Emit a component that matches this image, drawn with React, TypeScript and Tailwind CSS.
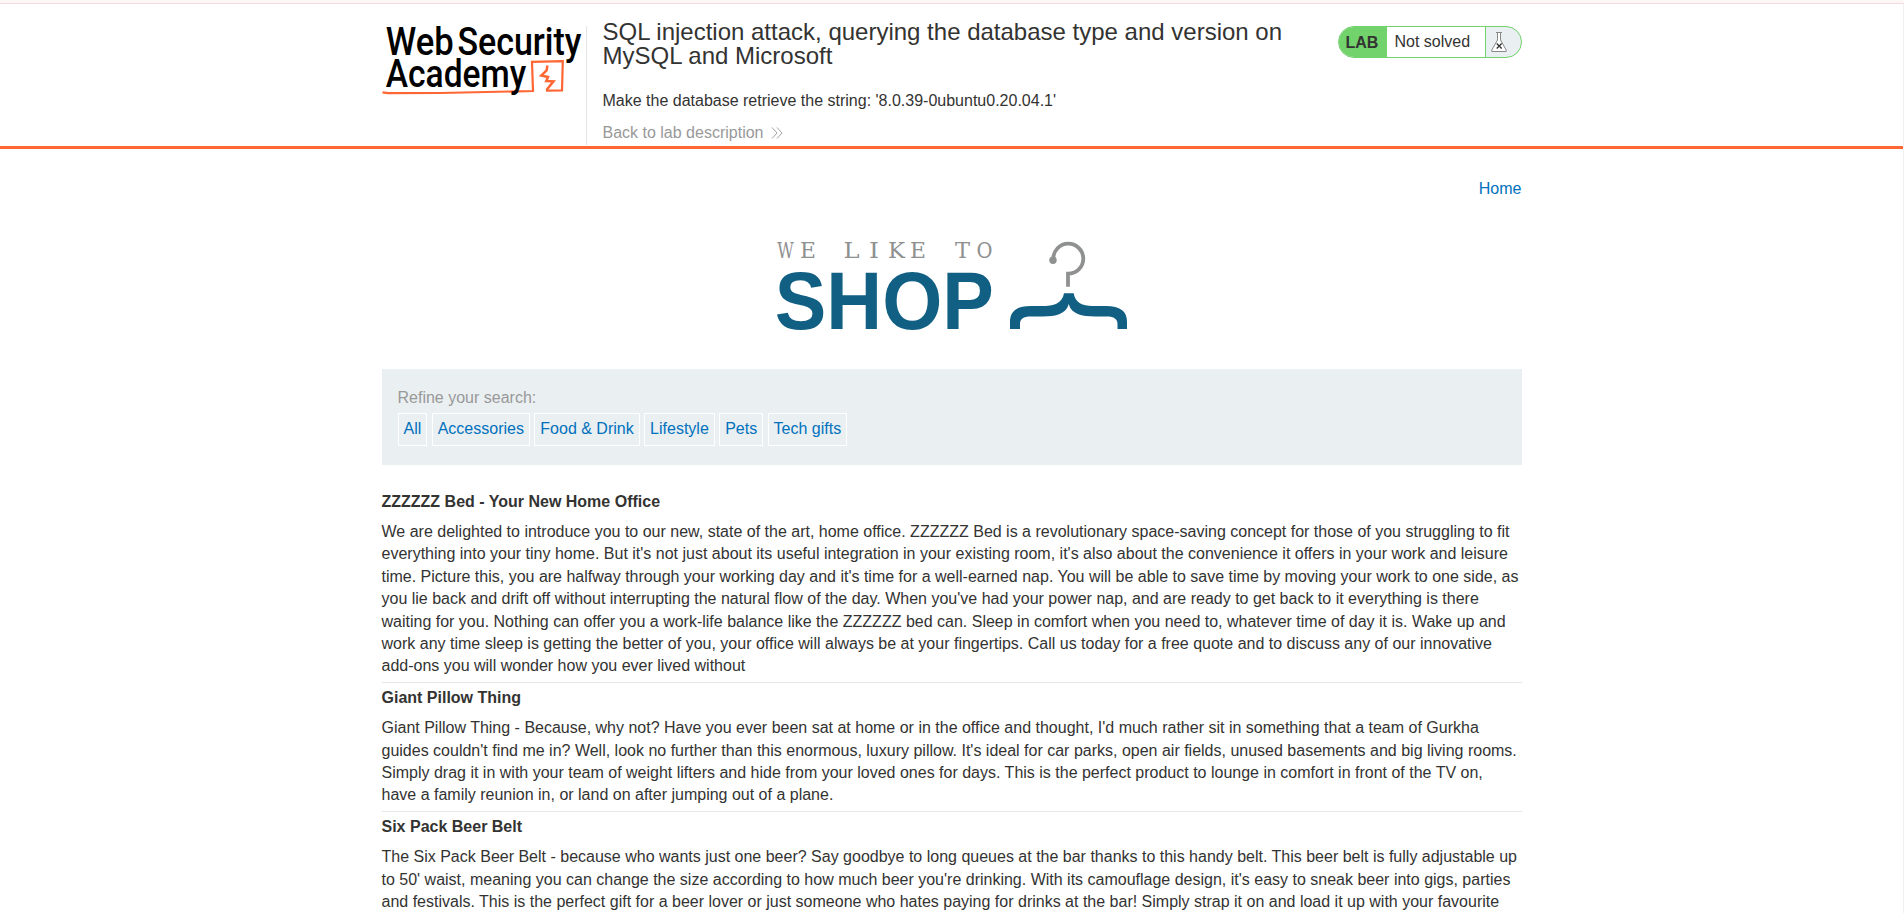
import React from "react";

const filters = ["All", "Accessories", "Food & Drink", "Lifestyle", "Pets", "Tech gifts"];

const products = [
  {
    title: "ZZZZZZ Bed - Your New Home Office",
    text: "We are delighted to introduce you to our new, state of the art, home office. ZZZZZZ Bed is a revolutionary space-saving concept for those of you struggling to fit everything into your tiny home. But it's not just about its useful integration in your existing room, it's also about the convenience it offers in your work and leisure time. Picture this, you are halfway through your working day and it's time for a well-earned nap. You will be able to save time by moving your work to one side, as you lie back and drift off without interrupting the natural flow of the day. When you've had your power nap, and are ready to get back to it everything is there waiting for you. Nothing can offer you a work-life balance like the ZZZZZZ bed can. Sleep in comfort when you need to, whatever time of day it is. Wake up and work any time sleep is getting the better of you, your office will always be at your fingertips. Call us today for a free quote and to discuss any of our innovative add-ons you will wonder how you ever lived without",
  },
  {
    title: "Giant Pillow Thing",
    text: "Giant Pillow Thing - Because, why not? Have you ever been sat at home or in the office and thought, I'd much rather sit in something that a team of Gurkha guides couldn't find me in? Well, look no further than this enormous, luxury pillow. It's ideal for car parks, open air fields, unused basements and big living rooms. Simply drag it in with your team of weight lifters and hide from your loved ones for days. This is the perfect product to lounge in comfort in front of the TV on, have a family reunion in, or land on after jumping out of a plane.",
  },
  {
    title: "Six Pack Beer Belt",
    text: "The Six Pack Beer Belt - because who wants just one beer? Say goodbye to long queues at the bar thanks to this handy belt. This beer belt is fully adjustable up to 50' waist, meaning you can change the size according to how much beer you're drinking. With its camouflage design, it's easy to sneak beer into gigs, parties and festivals. This is the perfect gift for a beer lover or just someone who hates paying for drinks at the bar! Simply strap it on and load it up with your favourite",
  },
];

// Letter, left edge and advance of each character in the logo's top line.
const tagline: [string, number, number][] = [
  ["W", 777.3, 16.5],
  ["E", 800, 16],
  ["L", 843.5, 16],
  ["I", 869, 10],
  ["K", 888, 17],
  ["E", 910, 16],
  ["T", 955, 15],
  ["O", 976.5, 16],
];

function AcademyLogo() {
  return (
    <svg className="block h-[76px] w-[204px] overflow-visible" viewBox="382 22 204 76" fontFamily="Roboto, sans-serif" fontWeight="500" fontSize="38" fill="#000">
      <path d="M382.5 92.3 L388 93.2 L440 93 L533 91 L532 61.8 L562.8 61.2 L562 90.3 L546 90.6" fill="none" stroke="#ff6633" strokeWidth="2.2" />
      <path d="M547.4 65.5 L546.6 70.5 L541.3 75.5 L548 77 L546.3 81 L553.5 81.3 L546.5 90" fill="none" stroke="#ff6633" strokeWidth="2.5" />
      <text x="385.8" y="54.5" textLength="68" lengthAdjust="spacingAndGlyphs">Web</text>
      <text x="457.4" y="54.5" textLength="124.1" lengthAdjust="spacingAndGlyphs">Security</text>
      <text x="385.8" y="87" textLength="140.4" lengthAdjust="spacingAndGlyphs">Academy</text>
    </svg>
  );
}

function ShopLogo() {
  return (
    <svg className="block h-[100px] w-[360px] overflow-visible" viewBox="772 235 360 100">
      <g fontFamily="'DejaVu Serif', serif" fontSize="22" fill="#8f9090">
        {tagline.map(([ch, x, w]) => (
          <text key={x} x={x} y="257.7" textLength={w} lengthAdjust="spacingAndGlyphs">{ch}</text>
        ))}
      </g>
      <text x="774.8" y="328.7" textLength="219" lengthAdjust="spacingAndGlyphs" fontFamily="'Liberation Sans', Arial, sans-serif" fontWeight="700" fontSize="81" fill="#115f83">SHOP</text>
      <path d="M1053.3 259 A15 15 0 1 1 1068 273.7 V286.7" fill="none" stroke="#8f9090" strokeWidth="3.8" />
      <circle cx="1053" cy="260.3" r="3.7" fill="#8f9090" />
      <path d="M1064 293.3 H1073.7 C1075 303 1083 306 1092 306 H1106 C1120 306 1127 311 1127 322 V329 H1117.5 V324 C1117.5 319 1114 316.5 1107 316.5 H1095 C1082 316.5 1071 314 1068.8 304 C1066 314 1056 316.5 1043 316.5 H1031 C1023 316.5 1020 319 1020 324 V329 H1010 V322 C1010 311 1017 306 1031 306 H1045 C1054 306 1062.5 303 1064 293.3 Z" fill="#115f83" />
    </svg>
  );
}

function LabStatus() {
  return (
    <div className="mt-[6px] flex h-8 w-[184px] overflow-hidden rounded-[16px] border border-[#72d26c] bg-[#eaeff2]">
      <div className="w-12 bg-[#72d26c] pl-[7px] leading-[31px] font-bold">LAB</div>
      <div className="w-[98px] bg-white pl-2 leading-[30px]">Not solved</div>
      <div className="w-9 border-l border-[#72d26c]">
        <svg className="block h-[30px] w-[31px]" viewBox="1486 27 31 30" fill="none">
          <path d="M1497.5 32.5 V40 L1491.8 50 V51.5 H1506.2 V50 L1500.5 40 V32.5" fill="#fff" stroke="#888" />
          <path d="M1496 32.5 H1502" stroke="#888" />
          <path d="M1496.7 43.5 L1501.7 48.5 M1501.7 43.5 L1496.7 48.5" stroke="#333" strokeWidth="1.3" />
        </svg>
      </div>
    </div>
  );
}

export default function App() {
  return (
    <div className="flex h-[913px] flex-col overflow-hidden bg-white font-['Liberation_Sans',Arial,sans-serif] text-base leading-[22.4px] text-[#333332]">
      <div className="h-1 shrink-0 border-b border-[#f0dcdf] bg-[#fff6f7]" />
      <div className="grow border-r border-[#f1f1f1]">
        <header className="h-[145px] border-b-[3px] border-[#ff6633] pt-4">
          <div className="mx-auto flex h-[126px] w-[1140px] items-start">
            <div className="mt-[2px]">
              <AcademyLogo />
            </div>
            <div className="mt-[6px] h-[119px] w-px bg-[#e3e3e3]" />
            <div className="w-[730px] pl-4">
              <h2 className="text-[24px] leading-6">SQL injection attack, querying the database type and version on MySQL and Microsoft</h2>
              <p className="mt-[22px]">Make the database retrieve the string: '8.0.39-0ubuntu0.20.04.1'</p>
              <a className="mt-[9.6px] flex items-center text-[#999]">
                Back to lab description
                <svg className="ml-2 h-3 w-3" viewBox="0 0 12 12" fill="none" stroke="#999" strokeWidth="0.9">
                  <path d="M1 0.5 L6 6 L1 11.5 M6 0.5 L11 6 L6 11.5" />
                </svg>
              </a>
            </div>
            <div className="ml-auto">
              <LabStatus />
            </div>
          </div>
        </header>
        <main className="mx-auto w-[1140px]">
          <div className="pt-[29px] text-right text-[#0071bd]">Home</div>
          <div className="mt-[35px] ml-[390px]">
            <ShopLogo />
          </div>
          <section className="mt-[34px] h-24 bg-[#eaeff2] px-4 pt-[18px]">
            <div className="text-[#999]">Refine your search:</div>
            <div className="mt-[3.6px] flex gap-[4.4px]">
              {filters.map((f) => (
                <a key={f} className="h-[33px] border border-white px-[5px] pt-[4px] text-[#0071bd]">
                  {f}
                </a>
              ))}
            </div>
          </section>
          <section className="pt-[25.6px]">
            {products.map((p) => (
              <article key={p.title} className="mb-[4.4px] border-b border-[#e5e7e8] pb-[4px]">
                <h3 className="font-bold">{p.title}</h3>
                <p className="mt-[7.6px]">{p.text}</p>
              </article>
            ))}
          </section>
        </main>
      </div>
    </div>
  );
}
